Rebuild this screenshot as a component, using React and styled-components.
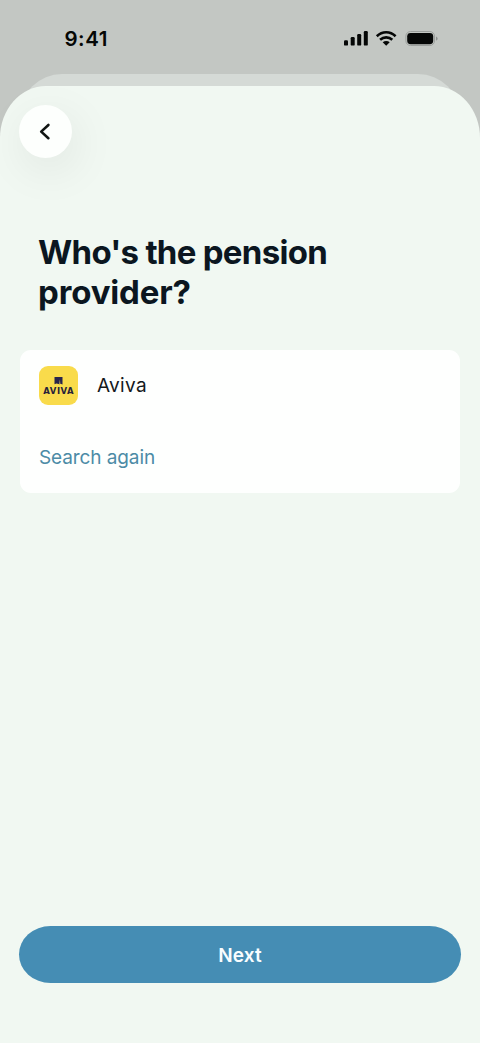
import React from 'react';
import styled, { createGlobalStyle } from 'styled-components';

const GlobalStyle = createGlobalStyle`
  * {
    box-sizing: border-box;
  }
  body {
    margin: 0;
    background: #c3c7c3;
    font-family: Inter, 'Liberation Sans', sans-serif;
  }
`;

const Screen = styled.div`
  display: flex;
  flex-direction: column;
  height: 1043px;
  max-width: 480px;
  overflow: hidden;
  background: #c3c7c3;
`;

const StatusBar = styled.header`
  display: flex;
  justify-content: space-between;
  height: 74px;
  padding: 26px 42px 0 64.5px;
`;

const Time = styled.span`
  font-size: 20.5px;
  font-weight: 600;
  line-height: 26px;
  letter-spacing: 0.5px;
  color: #050706;
`;

const StatusIcons = styled.svg`
  display: block;
  margin-top: 2px;
`;

// The previous sheet, peeking out above the current one
const BackSheet = styled.div`
  flex: none;
  height: 60px;
  margin: 0 20px -48px;
  border-radius: 42px 42px 0 0;
  background: #d5dad6;
`;

const Sheet = styled.main`
  position: relative;
  flex: 1;
  display: flex;
  flex-direction: column;
  align-items: stretch;
  padding: 19px 19px 60px;
  border-radius: 46px 46px 0 0 / 52px 52px 0 0;
  background: #f1f8f2;
`;

const BackButton = styled.button`
  display: flex;
  align-items: center;
  justify-content: center;
  width: 53px;
  height: 53px;
  padding: 0;
  border: none;
  border-radius: 50%;
  background: #fdfffd;
  box-shadow: 4px 12px 46px rgba(30, 30, 30, 0.08);
`;

const Title = styled.h1`
  margin: 75px 0 0 19px;
  font-size: 33px;
  font-weight: 700;
  line-height: 39.5px;
  color: #0b1620;
`;

const TitleLine = styled.span`
  display: block;
  letter-spacing: ${({ $tracking }) => $tracking};
`;

const Card = styled.section`
  display: flex;
  flex-direction: column;
  align-items: flex-start;
  height: 143px;
  margin: 38px 1px 0;
  padding: 16px 19px;
  border-radius: 11px;
  background: #fefffe;
`;

const Provider = styled.div`
  display: flex;
  align-items: center;
  gap: 19px;
  height: 39px;
`;

const Logo = styled.div`
  display: flex;
  flex-direction: column;
  align-items: center;
  width: 39px;
  height: 39px;
  padding-top: 11px;
  border-radius: 9px;
  background: #f9db4b;
`;

const LogoName = styled.span`
  margin-top: 1px;
  font-family: 'DejaVu Sans', sans-serif;
  font-size: 8.5px;
  font-weight: 700;
  line-height: 10px;
  letter-spacing: 0.5px;
  margin-right: -0.5px;
  color: #27223a;
`;

const ProviderName = styled.span`
  margin-top: 1px;
  font-size: 19px;
  line-height: 24px;
  letter-spacing: 0.3px;
  color: #15191c;
`;

const SearchLink = styled.button`
  margin-top: 41px;
  padding: 0;
  border: none;
  background: none;
  font-family: inherit;
  font-size: 19px;
  line-height: 24px;
  letter-spacing: -0.1px;
  color: #4c8ba6;
`;

const NextButton = styled.button`
  height: 57px;
  margin-top: auto;
  padding: 1px 0 0;
  border: none;
  border-radius: 32px / 29px;
  background: #458db4;
  font-family: inherit;
  font-size: 19px;
  font-weight: 600;
  letter-spacing: 0.1px;
  color: #f8fdff;
`;

function App() {
  return (
    <>
      <GlobalStyle />
      <Screen>
        <StatusBar>
          <Time>9:41</Time>
          <StatusIcons width="94" height="20" viewBox="0 0 94 20" fill="#050706">
            <rect x="0" y="12.2" width="4" height="5.4" rx="1.2" />
            <rect x="6.7" y="9" width="4" height="8.6" rx="1.2" />
            <rect x="13.2" y="6" width="4" height="11.6" rx="1.2" />
            <rect x="19.8" y="3" width="4" height="14.6" rx="1.2" />
            <g fill="none" stroke="#050706" strokeWidth="2.6">
              <path d="M32.8 8.2C38.3 3 46.1 3 51.6 8.2" />
              <path d="M36.1 11.8C39.7 8.5 44.7 8.5 48.3 11.8" />
            </g>
            <path d="M38.7 14.3C40.7 12.6 43.7 12.6 45.7 14.3L42.2 17.8Z" />
            <rect x="61.9" y="3.5" width="28.6" height="14" rx="4.6" fill="none" stroke="#9b9f9c" />
            <rect x="63.2" y="4.9" width="26" height="11.3" rx="3.4" />
            <path d="M92 8.4C94.2 9.2 94.2 11.8 92 12.6Z" fill="#8f9390" />
          </StatusIcons>
        </StatusBar>
        <BackSheet />
        <Sheet>
          <BackButton aria-label="Back">
            <svg width="20" height="20" viewBox="0 0 20 20" fill="none" stroke="#111513" strokeWidth="2.6" strokeLinecap="round" strokeLinejoin="round">
              <path d="M12.4 3L5.2 9.6L12.4 16.2" />
            </svg>
          </BackButton>
          <Title>
            <TitleLine $tracking="-0.7px">Who's the pension</TitleLine>
            <TitleLine $tracking="-0.15px">provider?</TitleLine>
          </Title>
          <Card>
            <Provider>
              <Logo>
                <svg width="9" height="8" viewBox="0 0 9 8">
                  <path d="M0.5 0H8.5V7.5L6.6 6.8L5.5 7.3L2.5 6.5L0.5 7.2Z" fill="#28244c" />
                  <path d="M5.9 2.5L6.3 6.8L5.1 7.3Z" fill="#c9b35a" />
                </svg>
                <LogoName>AVIVA</LogoName>
              </Logo>
              <ProviderName>Aviva</ProviderName>
            </Provider>
            <SearchLink>Search again</SearchLink>
          </Card>
          <NextButton>Next</NextButton>
        </Sheet>
      </Screen>
    </>
  );
}

export default App;
